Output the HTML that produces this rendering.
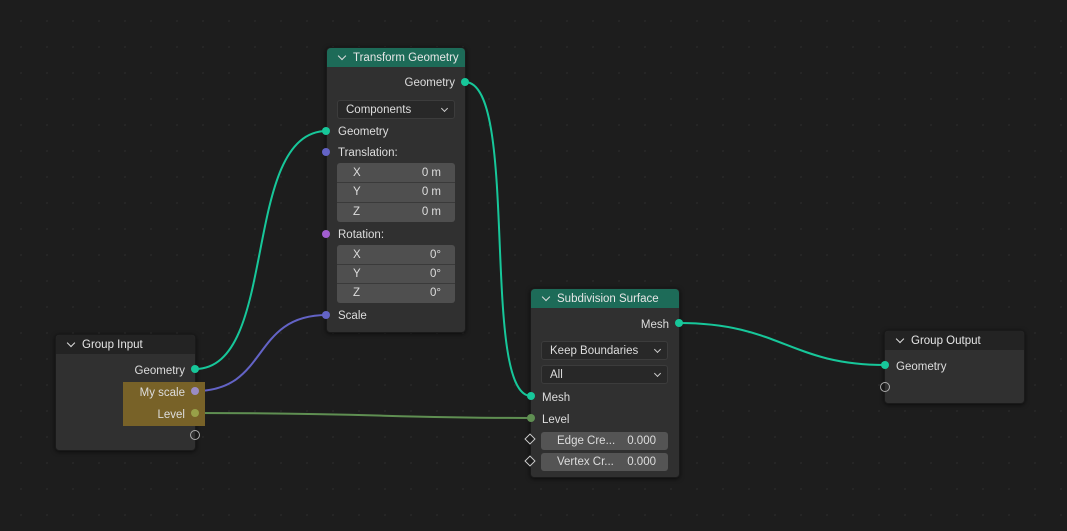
<!DOCTYPE html><html><head><style>
body{margin:0;width:1067px;height:531px;background:#1d1d1d;font-family:"Liberation Sans",sans-serif;font-size:11.5px;color:#ddd;position:relative;overflow:hidden;
background-image:radial-gradient(circle,#262626 1px,transparent 1.2px);background-size:26px 26px;background-position:8px 8px}
.n{position:absolute;background:#303030;border-radius:4px;box-shadow:0 1px 4px rgba(0,0,0,.6);border:1px solid #1a1a1a}
.h{height:19px;line-height:20px;padding-left:26px;border-radius:4px 4px 0 0;position:relative;color:#e6e6e6}
.h:before{content:"";position:absolute;left:12px;top:5px;width:5px;height:5px;border-right:1.3px solid #ddd;border-bottom:1.3px solid #ddd;transform:rotate(45deg)}
.t{position:absolute;white-space:nowrap;margin-top:1px}
.s{position:absolute;width:8px;height:8px;border-radius:50%}
.f{position:absolute;background:#545454;border-radius:3px;height:18px;line-height:18px}
.dd{position:absolute;background:#282828;border:1px solid #3c3c3c;border-radius:3px;height:19px;line-height:18px;padding-left:8px;box-sizing:border-box}
.dd:after{content:"";position:absolute;right:7px;top:5px;width:4px;height:4px;border-right:1.2px solid #ccc;border-bottom:1.2px solid #ccc;transform:rotate(45deg)}
.dm{position:absolute;width:6px;height:6px;background:#1d1d1d;border:1.5px solid #ccc;transform:rotate(45deg)}
</style></head><body>
<svg width="1067" height="531" style="position:absolute;left:0;top:0">
<g fill="none" stroke-width="2">
<path d="M195 369 C280 369 240 131 327 131" stroke="#17c79a"/>
<path d="M195 391 C270 391 250 315 327 315" stroke="#6363c6"/>
<path d="M195 413 C360 413 400 418 531 418" stroke="#5f8f52"/>
<path d="M465 82 C520 82 480 396 531 396" stroke="#17c79a"/>
<path d="M679 323 C780 323 790 365 885 365" stroke="#17c79a"/>
</g></svg>

<div class="n" style="left:326px;top:47px;width:138px;height:284px">
<div class="h" style="background:#1d6b58">Transform Geometry</div>
<div class="t" style="right:10px;top:28px">Geometry</div>
<div class="dd" style="left:10px;top:52px;width:118px">Components</div>
<div class="t" style="left:11px;top:77px">Geometry</div>
<div class="t" style="left:11px;top:98px">Translation:</div>
<div class="f" style="left:10px;top:115px;width:118px;height:59px;background:#4f4f4f"></div>
<div class="t" style="left:26px;top:118px">X</div><div class="t" style="right:24px;top:118px">0 m</div>
<div class="t" style="left:26px;top:137px">Y</div><div class="t" style="right:24px;top:137px">0 m</div>
<div class="t" style="left:26px;top:157px">Z</div><div class="t" style="right:24px;top:157px">0 m</div>
<div style="position:absolute;left:10px;top:134px;width:118px;height:1px;background:#3a3a3a"></div>
<div style="position:absolute;left:10px;top:154px;width:118px;height:1px;background:#3a3a3a"></div>
<div class="t" style="left:11px;top:180px">Rotation:</div>
<div class="f" style="left:10px;top:197px;width:118px;height:58px;background:#4f4f4f"></div>
<div class="t" style="left:26px;top:200px">X</div><div class="t" style="right:24px;top:200px">0°</div>
<div class="t" style="left:26px;top:219px">Y</div><div class="t" style="right:24px;top:219px">0°</div>
<div class="t" style="left:26px;top:238px">Z</div><div class="t" style="right:24px;top:238px">0°</div>
<div style="position:absolute;left:10px;top:216px;width:118px;height:1px;background:#3a3a3a"></div>
<div style="position:absolute;left:10px;top:235px;width:118px;height:1px;background:#3a3a3a"></div>
<div class="t" style="left:11px;top:261px">Scale</div>
</div>
<div class="s" style="left:461px;top:78px;background:#17c79a"></div>
<div class="s" style="left:322px;top:127px;background:#17c79a"></div>
<div class="s" style="left:322px;top:148px;background:#6363c6"></div>
<div class="s" style="left:322px;top:230px;background:#a25ed0"></div>
<div class="s" style="left:322px;top:311px;background:#6363c6"></div>

<div class="n" style="left:55px;top:334px;width:139px;height:115px">
<div class="h" style="background:#232323">Group Input</div>
<div class="t" style="right:10px;top:29px">Geometry</div>
<div style="position:absolute;left:67px;top:47px;width:82px;height:44px;background:#786228"></div>
<div class="t" style="right:10px;top:51px">My scale</div>
<div class="t" style="right:10px;top:73px">Level</div>
</div>
<div class="s" style="left:191px;top:365px;background:#17c79a"></div>
<div class="s" style="left:191px;top:387px;background:#9a8cc4"></div>
<div class="s" style="left:191px;top:409px;background:#98a048"></div>
<div class="s" style="left:190px;top:430px;border:1.3px solid #aaa;width:8px;height:8px"></div>

<div class="n" style="left:530px;top:288px;width:148px;height:188px">
<div class="h" style="background:#1d6b58">Subdivision Surface</div>
<div class="t" style="right:10px;top:29px">Mesh</div>
<div class="dd" style="left:10px;top:52px;width:127px">Keep Boundaries</div>
<div class="dd" style="left:10px;top:76px;width:127px">All</div>
<div class="t" style="left:11px;top:102px">Mesh</div>
<div class="t" style="left:11px;top:124px">Level</div>
<div class="f" style="left:10px;top:143px;width:127px"><span class="t" style="left:16px;margin-top:0">Edge Cre...</span><span class="t" style="right:12px;margin-top:0">0.000</span></div>
<div class="f" style="left:10px;top:164px;width:127px"><span class="t" style="left:16px;margin-top:0">Vertex Cr...</span><span class="t" style="right:12px;margin-top:0">0.000</span></div>
</div>
<div class="s" style="left:675px;top:319px;background:#17c79a"></div>
<div class="s" style="left:527px;top:392px;background:#17c79a"></div>
<div class="s" style="left:527px;top:414px;background:#5f8f52"></div>
<div class="dm" style="left:526px;top:435px"></div>
<div class="dm" style="left:526px;top:457px"></div>

<div class="n" style="left:884px;top:330px;width:139px;height:72px">
<div class="h" style="background:#232323">Group Output</div>
<div class="t" style="left:11px;top:29px">Geometry</div>
</div>
<div class="s" style="left:881px;top:361px;background:#17c79a"></div>
<div class="s" style="left:880px;top:382px;border:1.3px solid #aaa;width:8px;height:8px"></div>
</body></html>
